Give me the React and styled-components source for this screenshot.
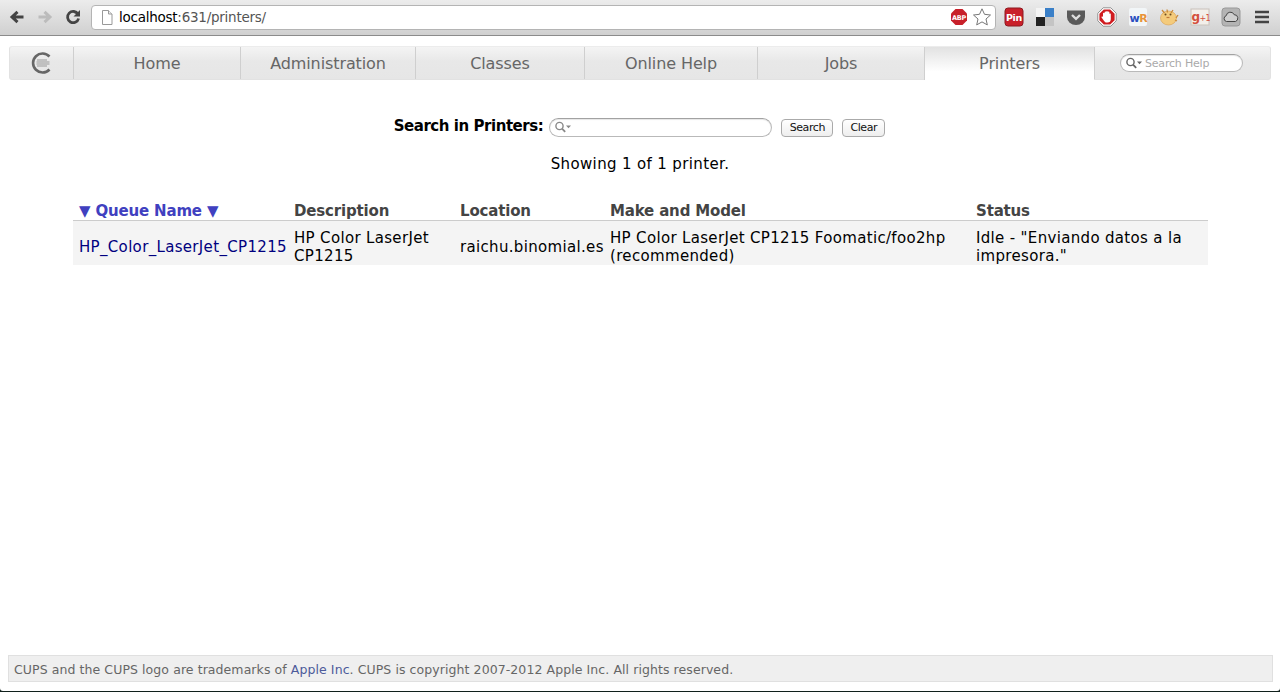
import styled, { createGlobalStyle } from "styled-components";

const GlobalStyle = createGlobalStyle`
	html, body {
		margin: 0;
		padding: 0;
		height: 100%;
		background: #10201c;
	}
	body {
		font-family: "DejaVu Sans", sans-serif;
		overflow: hidden;
	}
`;

const Page = styled.div`
	display: flex;
	flex-direction: column;
	width: 1280px;
	height: 691px;
	background: #fff;
	border-radius: 0 0 3px 3px;
`;

const Toolbar = styled.div`
	display: flex;
	align-items: center;
	height: 36px;
	box-sizing: border-box;
	padding: 0 8px 1px 7px;
	background: linear-gradient(#ececec, #d0d0d0);
	border-bottom: 1px solid #8b8b8b;
`;

const NavIcon = styled.svg`
	width: 20px;
	height: 20px;
	margin-right: 8px;
	flex: none;
`;

const Omnibox = styled.div`
	display: flex;
	align-items: center;
	width: 905px;
	height: 25px;
	box-sizing: border-box;
	padding: 0 3px 0 9px;
	background: #fff;
	border: 1px solid #b4b4b4;
	border-radius: 4px;
	font-size: 13.5px;
	letter-spacing: -0.25px;
	color: #555;
`;

const Url = styled.span`
	flex: 1;
	margin-left: 6px;

	b {
		font-weight: normal;
		color: #000;
	}
`;

const StarIcon = styled.svg`
	width: 20px;
	height: 20px;
	margin-left: 4px;
	flex: none;
`;

const Extensions = styled.div`
	display: flex;
	align-items: center;
	gap: 11px;
	margin-left: 8px;
`;

const ExtIcon = styled.svg`
	width: 20px;
	height: 20px;
	flex: none;
`;

const Tabs = styled.nav`
	display: flex;
	height: 34px;
	margin: 10px 9px 0 9px;
	box-sizing: border-box;
	background: linear-gradient(#f4f4f4, #e8e8e8 45%, #e6e6e6);
	border: 1px solid #e2e2e2;
	border-top-color: #ececec;
	border-radius: 3px;
`;

const Tab = styled.a`
	display: flex;
	align-items: center;
	justify-content: center;
	width: ${(p) => p.$width}px;
	flex: none;
	box-sizing: border-box;
	border-left: 1px solid #cfcfcf;
	font-size: 16px;
	letter-spacing: -0.1px;
	color: #666;
	background: ${(p) => (p.$active ? "linear-gradient(#e2e2e2, #fff 75%)" : "none")};
	${(p) => p.$active && "margin-bottom: -1px;"}
`;

const LogoCell = styled.div`
	display: flex;
	align-items: center;
	justify-content: center;
	width: 63px;
	padding-right: 2px;
	box-sizing: border-box;
`;

const HelpCell = styled.div`
	flex: 1;
	display: flex;
	align-items: center;
	padding-left: 25px;
	border-left: 1px solid #cfcfcf;
`;

const SearchField = styled.div`
	display: flex;
	align-items: center;
	box-sizing: border-box;
	width: ${(p) => p.$width}px;
	height: ${(p) => p.$height}px;
	padding-left: 4px;
	background: #fff;
	border: 1px solid #b9b9b9;
	border-top-color: #a2a2a2;
	border-radius: 10px;
	box-shadow: inset 0 1px 1px #e6e6e6;
	font-size: 11px;
	letter-spacing: -0.2px;
	color: #aaa;
`;

const Glass = styled.svg`
	width: 18px;
	height: 12px;
	flex: none;
	margin-right: 2px;
`;

const Content = styled.main`
	flex: 1;
	padding-top: 36px;
`;

const SearchForm = styled.form`
	display: flex;
	align-items: center;
	justify-content: center;
	height: 22px;
	margin-left: -1px;
`;

const SearchLabel = styled.label`
	font-size: 15px;
	font-weight: bold;
	letter-spacing: -0.45px;
	color: #000;
	margin: 0 6px 3px 0;
`;

const MiniButton = styled.button`
	height: 18px;
	box-sizing: border-box;
	margin: 1px 0 0 ${(p) => p.$gap}px;
	width: ${(p) => p.$width}px;
	padding: 0;
	font-family: inherit;
	font-size: 11px;
	letter-spacing: -0.4px;
	color: #111;
	background: linear-gradient(#fff, #eee);
	border: 1px solid #aaa;
	border-radius: 4px;
`;

const Summary = styled.p`
	margin: 16px 0 0;
	height: 20px;
	line-height: 20px;
	text-align: center;
	font-size: 15px;
	letter-spacing: 0.36px;
	color: #000;
`;

const Table = styled.table`
	width: 1135px;
	margin: 26px 0 0 73px;
	border-collapse: collapse;
	table-layout: fixed;
	font-size: 15px;
	letter-spacing: 0.33px;
	line-height: 18px;
`;

const HeadCell = styled.th`
	height: 20px;
	padding: 3px 0 0 6px;
	box-sizing: border-box;
	text-align: left;
	font-size: 15px;
	line-height: 16px;
	font-weight: bold;
	letter-spacing: -0.17px;
	color: #444;
	border-bottom: 1px solid #ccc;
	white-space: nowrap;

	a {
		color: #4040c0;
	}
`;

const BodyRow = styled.tr`
	background: #f4f4f4;
`;

const BodyCell = styled.td`
	height: 44px;
	padding: 8px 0 0 6px;
	box-sizing: border-box;
	color: #000;
	vertical-align: middle;

	a {
		color: #00007f;
	}
`;

const Footer = styled.footer`
	height: 27px;
	margin: 0 7px 9px 8px;
	padding-left: 5px;
	box-sizing: border-box;
	line-height: 27px;
	font-size: 12.5px;
	letter-spacing: 0.08px;
	color: #666;
	background: #efefef;
	border: 1px solid #e0e0e0;

	a {
		color: #4c5a9a;
	}
`;

const columns = [215, 166, 150, 366, 238];

const tabs = [
	{ label: "Home", width: 167 },
	{ label: "Administration", width: 175 },
	{ label: "Classes", width: 169 },
	{ label: "Online Help", width: 173 },
	{ label: "Jobs", width: 167 },
	{ label: "Printers", width: 170, active: true },
];

const SearchGlass = ({ color = "#666" }) => (
	<Glass viewBox="0 0 18 12">
		<circle cx="5.5" cy="5" r="3.6" fill="none" stroke={color} strokeWidth="1.4" />
		<path d="M8 7.6l3.2 3.2" stroke={color} strokeWidth="1.8" />
		<path d="M12 4.5h5l-2.5 2.8z" fill={color} />
	</Glass>
);

const App = () => {
	return (
		<Page>
			<GlobalStyle />
			<Toolbar>
				<NavIcon viewBox="0 0 20 20">
					<path d="M16.5 10H6M10.5 4.8L5 10l5.5 5.2" fill="none" stroke="#444" strokeWidth="3" />
				</NavIcon>
				<NavIcon viewBox="0 0 20 20">
					<path d="M3.5 10H14M9.5 4.8L15 10l-5.5 5.2" fill="none" stroke="#bcbcbc" strokeWidth="3" />
				</NavIcon>
				<NavIcon viewBox="0 0 20 20">
					<path d="M15 7.2A5.6 5.6 0 1 0 15.6 11.5" fill="none" stroke="#444" strokeWidth="2.8" />
					<path d="M17 3v6.5h-6.5z" fill="#444" />
				</NavIcon>
				<Omnibox>
					<svg width="12" height="15" viewBox="0 0 12 15">
						<path d="M1.5.5h6l3.5 3.5v10.5h-9.5z" fill="#fff" stroke="#999" />
						<path d="M7.5.5v3.5h3.5" fill="#eee" stroke="#999" />
					</svg>
					<Url>
						<b>localhost</b>:631/printers/
					</Url>
					<svg width="18" height="18" viewBox="0 0 18 18">
						<path d="M5.5 1h7L17 5.5v7L12.5 17h-7L1 12.5v-7z" fill="#c8202a" />
						<text x="9" y="11.5" fontSize="6.5" fontWeight="bold" textAnchor="middle" fill="#fff" letterSpacing="-0.3">ABP</text>
					</svg>
					<StarIcon viewBox="0 0 20 20">
						<path d="M10 1.8l2.5 5.5 6 .7-4.5 4 1.3 5.9-5.3-3-5.3 3 1.3-5.9-4.5-4 6-.7z" fill="#fff" stroke="#777" />
					</StarIcon>
				</Omnibox>
				<Extensions>
					<ExtIcon viewBox="0 0 20 20">
						<rect x="1" y="1" width="18" height="18" rx="3" fill="#c9202a" stroke="#8d1a20" />
						<text x="10" y="14" fontSize="9.5" fontWeight="bold" textAnchor="middle" fill="#fff" letterSpacing="-0.3">Pin</text>
					</ExtIcon>
					<ExtIcon viewBox="0 0 20 20">
						<rect x="1" y="1" width="9" height="9" fill="#f4f4f4" />
						<rect x="10" y="1" width="9" height="9" fill="#3b80c8" />
						<rect x="1" y="10" width="9" height="9" fill="#222" />
						<rect x="10" y="10" width="9" height="9" fill="#c4c4c4" />
					</ExtIcon>
					<ExtIcon viewBox="0 0 20 20">
						<path d="M1 3.5h18V10a9 8 0 0 1-18 0z" fill="#5a5a5a" />
						<path d="M6 8l4 3.8L14 8" fill="none" stroke="#ddd" strokeWidth="2.4" />
					</ExtIcon>
					<ExtIcon viewBox="0 0 20 20">
						<path d="M6.2.8h7.6l5.4 5.4v7.6l-5.4 5.4H6.200L.8 13.800V6.200z" fill="#fff" stroke="#555" strokeWidth=".6" />
						<path d="M6.800 2.400h6.400l4.400 4.400v6.400l-4.400 4.400H6.800l-4.400-4.400V6.800z" fill="#d01c20" />
						<path d="M6 10V6.500a.8.8 0 0 1 1.600 0V5.200a.8.8 0 0 1 1.600 0V4.800a.8.8 0 0 1 1.600 0v.6a.8.8 0 0 1 1.600 0v1.400a.8.8 0 0 1 1.400 0v5.200a3.500 3.500 0 0 1-3.500 3.500H9.500c-1.200 0-1.800-.6-2.400-1.500L4.600 10.600c-.5-.9.700-1.600 1.400-.6z" fill="#fff" />
					</ExtIcon>
					<ExtIcon viewBox="0 0 20 20">
						<rect x="1" y="1" width="18" height="18" rx="2" fill="#f2f6f8" />
						<text x="1.5" y="14.5" fontSize="11" fontWeight="bold" fill="#2a4fc0" letterSpacing="-0.5">w<tspan fill="#e8943a">R</tspan></text>
					</ExtIcon>
					<ExtIcon viewBox="0 0 20 20">
						<ellipse cx="9.5" cy="11" rx="8" ry="7" fill="#f4cb7c" stroke="#d8a050" strokeWidth=".6" />
						<path d="M3 3l2.5 3M8 2.5l.5 3M14 3l-2 3M19 8l-2 3M18 14l-2-1" stroke="#c98a3a" strokeWidth="1.3" />
						<circle cx="6.5" cy="7.5" r="1" fill="#6b4a1e" />
						<circle cx="11.5" cy="7.5" r="1" fill="#6b4a1e" />
						<path d="M7.5 10.5h3" stroke="#c07a3a" strokeWidth="1.2" />
					</ExtIcon>
					<ExtIcon viewBox="0 0 20 20">
						<rect x="1" y="2" width="18" height="16" fill="#f3efea" stroke="#c9c2bb" />
						<text x="1.5" y="13.5" fontSize="12" fontWeight="bold" fill="#d4503e" letterSpacing="-0.6">g<tspan fontSize="8" fontWeight="normal">+1</tspan></text>
					</ExtIcon>
					<ExtIcon viewBox="0 0 20 20">
						<rect x="1" y="1" width="18" height="18" rx="3" fill="#b4b4b4" stroke="#999" />
						<path d="M5.5 14.5a3 3 0 0 1-.3-5.8 4.2 4.2 0 0 1 8-1 3.5 3.5 0 0 1 1.3 6.8z" fill="#cfcfcf" stroke="#444" />
					</ExtIcon>
					<ExtIcon viewBox="0 0 20 20">
						<path d="M3 5h14M3 10h14M3 15h14" stroke="#444" strokeWidth="2.6" />
					</ExtIcon>
				</Extensions>
			</Toolbar>

			<Tabs>
				<LogoCell>
					<svg width="22" height="24" viewBox="0 0 22 24">
						<path d="M19.5 5.5A9.5 9.5 0 1 0 19.5 18.5" fill="none" stroke="#666" strokeWidth="2.6" />
						<path d="M7 9h10M6.500 11h13M6.500 13h13M7 15h10" stroke="#999" strokeWidth="1" />
					</svg>
				</LogoCell>
				{tabs.map((tab) => (
					<Tab key={tab.label} $width={tab.width} $active={tab.active}>
						{tab.label}
					</Tab>
				))}
				<HelpCell>
					<SearchField $width={123} $height={18}>
						<SearchGlass />
						Search Help
					</SearchField>
				</HelpCell>
			</Tabs>

			<Content>
				<SearchForm>
					<SearchLabel>Search in Printers:</SearchLabel>
					<SearchField $width={223} $height={19}>
						<SearchGlass color="#888" />
					</SearchField>
					<MiniButton type="button" $gap={9} $width={52}>Search</MiniButton>
					<MiniButton type="button" $gap={9} $width={43}>Clear</MiniButton>
				</SearchForm>
				<Summary>Showing 1 of 1 printer.</Summary>
				<Table>
					<colgroup>
						{columns.map((width) => (
							<col key={width} width={width} />
						))}
					</colgroup>
					<thead>
						<tr>
							<HeadCell><a>▼ Queue Name ▼</a></HeadCell>
							<HeadCell>Description</HeadCell>
							<HeadCell>Location</HeadCell>
							<HeadCell>Make and Model</HeadCell>
							<HeadCell>Status</HeadCell>
						</tr>
					</thead>
					<tbody>
						<BodyRow>
							<BodyCell><a>HP_Color_LaserJet_CP1215</a></BodyCell>
							<BodyCell>HP Color LaserJet CP1215</BodyCell>
							<BodyCell>raichu.binomial.es</BodyCell>
							<BodyCell>HP Color LaserJet CP1215 Foomatic/foo2hp (recommended)</BodyCell>
							<BodyCell>Idle - "Enviando datos a la impresora."</BodyCell>
						</BodyRow>
					</tbody>
				</Table>
			</Content>

			<Footer>
				CUPS and the CUPS logo are trademarks of <a>Apple Inc</a>. CUPS is copyright 2007-2012 Apple Inc. All rights reserved.
			</Footer>
		</Page>
	);
};

export default App;
